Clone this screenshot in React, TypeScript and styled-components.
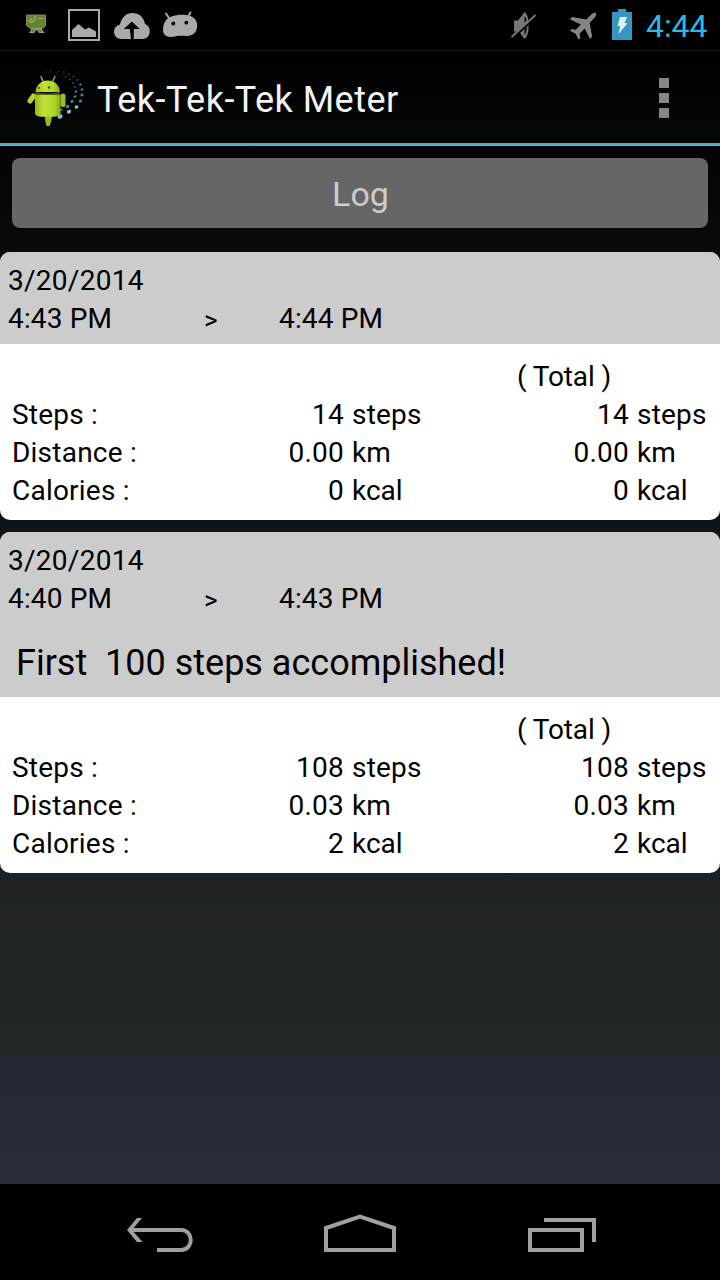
import React from "react";
import styled, { createGlobalStyle } from "styled-components";

const GlobalStyle = createGlobalStyle`
  * { box-sizing: border-box; }
  body { margin: 0; background: #000; font-family: Roboto, "Noto Sans", sans-serif; }
`;

const Screen = styled.div`
  width: 720px;
  height: 1280px;
  display: flex;
  flex-direction: column;
  overflow: hidden;
  background: linear-gradient(#000 0, #020303 146px, #08090b 240px, #111518 526px, #1e2225 880px, #23282a 1056px, #252931 1056px, #282c34 1184px);
`;

const StatusBar = styled.header`
  height: 50px;
  flex: none;
  display: flex;
  justify-content: space-between;
  background: #000;
`;

const Clock = styled.time`
  width: 74px;
  margin-left: 12px;
  font-size: 32px;
  line-height: 52px;
  letter-spacing: -0.1px;
  white-space: nowrap;
  color: #33b5e5;
`;

const StatusGroup = styled.div`
  display: flex;
  height: 50px;
`;

const ActionBar = styled.div`
  height: 96px;
  flex: none;
  display: flex;
  align-items: center;
  padding: 2px 51px 0 26px;
  background: linear-gradient(#000, #050707);
  border-top: 1px solid #181a1b;
  border-bottom: 3px solid #4fadd9;
`;

const Title = styled.h1`
  flex: 1;
  margin: 0 0 0 11px;
  padding-top: 4px;
  font-size: 36px;
  line-height: 44px;
  font-weight: 400;
  letter-spacing: 0.47px;
  white-space: nowrap;
  color: #f3f3f3;
`;

const Overflow = styled.div`
  display: grid;
  gap: 5px;
`;

const OverflowDot = styled.i`
  width: 10px;
  height: 10px;
  background: #868686;
`;

const Content = styled.main`
  flex: 1;
  display: flex;
  flex-direction: column;
`;

const LogButton = styled.button`
  margin: 12px 12px 24px;
  height: 70px;
  padding: 2px 0 0 1px;
  border: 0;
  border-radius: 8px;
  background: #666;
  color: #ccc;
  font-family: inherit;
  font-size: 34px;
  line-height: 40px;
`;

const Card = styled.section`
  margin-bottom: 12px;
  border-radius: 10px;
  overflow: hidden;
  background: #fff;
  color: #000;
  font-size: 28px;
  line-height: 38px;
  white-space: pre;
`;

const CardHead = styled.div`
  padding: 10px 8px 6px;
  background: #ccc;
`;

const DateText = styled.div`
  letter-spacing: 0.27px;
`;

const TimeRow = styled.div`
  display: grid;
  grid-template-columns: 196px 75px 1fr;
  letter-spacing: 0.15px;
`;

const Arrow = styled.span`
  font-size: 26px;
  line-height: 40px;
  height: 38px;
`;

const Achievement = styled.div`
  padding: 0 8px;
  margin-top: 20px;
  font-size: 36px;
  line-height: 50px;
  height: 53px;
`;

const CardBody = styled.div`
  padding: 14px 0 10px 12px;
`;

const StatRow = styled.div`
  display: grid;
  grid-template-columns: 232px 100px 185px 100px 1fr;
`;

const StatLabel = styled.span`
  letter-spacing: 0.22px;
`;

const Num = styled.span`
  text-align: right;
  letter-spacing: 0.25px;
`;

const Unit = styled.span<{ $tracking: string }>`
  padding-left: 8px;
  letter-spacing: ${(p) => p.$tracking};
`;

const TotalLabel = styled.div`
  padding-left: 505px;
  letter-spacing: -0.12px;
`;

const NavBar = styled.nav`
  height: 96px;
  flex: none;
  display: flex;
  justify-content: space-between;
  padding: 0 120px;
  background: #000;
`;

type Stat = { label: string; value: string; total: string; unit: string };
type Entry = { date: string; from: string; to: string; achievement?: string; stats: Stat[] };

const entries: Entry[] = [
  {
    date: "3/20/2014",
    from: "4:43 PM",
    to: "4:44 PM",
    stats: [
      { label: "Steps :", value: "14", total: "14", unit: "steps" },
      { label: "Distance :", value: "0.00", total: "0.00", unit: "km" },
      { label: "Calories :", value: "0", total: "0", unit: "kcal" },
    ],
  },
  {
    date: "3/20/2014",
    from: "4:40 PM",
    to: "4:43 PM",
    achievement: "First  100 steps accomplished!",
    stats: [
      { label: "Steps :", value: "108", total: "108", unit: "steps" },
      { label: "Distance :", value: "0.03", total: "0.03", unit: "km" },
      { label: "Calories :", value: "2", total: "2", unit: "kcal" },
    ],
  },
];

const NotificationIcons = () => (
  <svg width="210" height="50" viewBox="0 0 210 50">
    <path d="M26.500 15h19v11l-3 2.500h-12l-4-3z" fill="#66852b" stroke="#7d8a5c" strokeWidth="1" />
    <path d="M31.500 28.500h10v2l2 2h-4l-1.500-2.500h-2.500l-1.500 2.500h-4l1.500-2z" fill="#66852b" stroke="#999c90" strokeWidth="1.200" />
    <path d="M35.500 16l-1 4.500-3 2-2-1.500 2.500-3M38 18.500h6" fill="none" stroke="#a3ad7d" strokeWidth="1.100" />
    <path d="M69 10h30v30H69z" fill="none" stroke="#aaa" strokeWidth="2" />
    <path d="M72 37v-7l6.500-6 6.500 5.500 4-2 7 4V37z" fill="#aaa" />
    <path d="M131 39h-10c-4 0-7-3.300-7-7.200 0-3.700 2.500-6.500 6-7.300 1.500-7 6-11.500 12.500-11.500 6.700 0 11.500 4.500 12.500 11 3 1 4.800 3.800 4.800 7.300 0 4.300-3 7.700-7 7.700h-9V29h6l-8-7.500-8 7.500h6z" fill="#aaa" />
    <path d="M163 30c0-7 3.500-12 8.500-13.500 5-2 11-2 16-1.300 6 1 9.700 5 9.700 10.300 0 6.500-4.500 10.500-10.200 10.500-4 0-8-.5-11 .3-7 2-13 0-13-6.300z" fill="#aaa" />
    <path d="M169 18l-3-4.500M188.500 16l2-3.500" stroke="#aaa" strokeWidth="2" strokeLinecap="round" />
    <circle cx="173.300" cy="23.500" r="1.900" />
    <circle cx="186.300" cy="22.700" r="1.900" />
  </svg>
);

const SystemIcons = () => (
  <svg width="144" height="50" viewBox="490 0 144 50">
    <path d="M514 20.500h4l6-7.500c4.500 4 4.500 22 0 25.500l-5-7h-5z" fill="#777" />
    <path d="M524 13c4.500 4 4.500 21 0 25" fill="none" stroke="#777" strokeWidth="2.500" />
    <path d="M524.500 16.500v6l2-2c-.3-2-1-3.500-2-4zM524.500 28v7c1.500-1.500 2.200-5 2.200-9z" fill="#000" />
    <path d="M512.500 38.500l24-22" stroke="#000" strokeWidth="2" />
    <path d="M511.500 37l24-22" stroke="#777" strokeWidth="1.900" />
    <path d="M595.800 13.200c1 1 .2 3-1.200 4.500l-5 5.300 2.600 13.800-2.200 2.200-5.300-10.500-5.200 5.200.8 4.300-1.600 1.500-3.200-5.700-5.500-3 1.600-1.700 4.200.7 5.100-5.200-11-5.300 2.300-2.200 14 2.500 5.200-5.200c1.500-1.500 3.500-2.200 4.400-1.200z" fill="#858585" />
    <path d="M612 12h6V9h8v3h6v28h-20z" fill="#3796bd" />
    <path d="M620 17h7l-2.500 6.300h3L618.500 34l1.700-8h-2.700z" fill="#def3fb" />
  </svg>
);

const trail: [number, number, number][] = [
  [60, 117.500, 2.600], [69, 112.700, 2.200], [76.500, 108, 2], [80.500, 102, 1.800], [82, 96, 1.600], [82, 90.500, 1.500],
  [80.500, 85.500, 1.300], [77.500, 81, 1.200], [73.500, 77.500, 1.100], [69, 75, 1], [64, 73, .9], [59, 72.500, .8], [51, 72, .7],
  [61, 111, 1.500], [67.500, 107.500, 1.900], [72, 102.500, 1.700], [75, 97.500, 1.500], [76, 92.500, 1.400], [75, 88, 1.200],
  [73, 84, 1.100], [70, 80.500, 1], [66, 78, .9], [62, 76, .8], [57, 74, .7], [46, 73, .6],
];

const AppIcon = () => (
  <svg width="60" height="64" viewBox="26 67 60 64">
    <defs>
      <linearGradient id="body" x1="0" x2="1" y1="0" y2="0">
        <stop offset="0" stopColor="#98b91c" />
        <stop offset=".35" stopColor="#c0e236" />
        <stop offset=".75" stopColor="#b0d628" />
        <stop offset="1" stopColor="#86a618" />
      </linearGradient>
    </defs>
    {trail.map(([x, y, r], i) => (
      <ellipse key={i} cx={x} cy={y} rx={r} ry={r * 0.8} fill={r > 1.9 ? "#86bfdc" : r > 1.200 ? "#4f809e" : "#33485c"} transform={`rotate(-25 ${x} ${y})`} />
    ))}
    <path d="M43.500 83l-2.500-5.500M52.300 83l2.700-5.500" stroke="#9bb344" strokeWidth="1.400" strokeLinecap="round" />
    <path d="M33.500 97l-3.500 5" stroke="#b0d628" strokeWidth="5" strokeLinecap="round" />
    <path d="M63 97v8.500" stroke="#9dc020" strokeWidth="5" strokeLinecap="round" />
    <path d="M44.500 115h8l-1.500 8-1.500 4h-3l-1-4z" fill="#9bb82a" />
    <path d="M35.500 93c.5-7 5.500-11.500 12.300-11.500S59.500 86 60 93z" fill="url(#body)" />
    <path d="M35 95.500h25.500V115c-1.500 2-4 2.500-7 2.700H41c-3-.2-5-1-6-2.700z" fill="url(#body)" />
    <path d="M35.500 94c6 1.500 18 1.500 24.500 0" fill="none" stroke="#4e6113" strokeWidth="1.400" />
    <circle cx="39" cy="89" r="1" fill="#485616" />
    <circle cx="49" cy="88.500" r="1.200" fill="#485616" />
  </svg>
);

const BackIcon = () => (
  <svg width="80" height="96" viewBox="120 1184 80 96" fill="none" stroke="#a0a0a0" strokeWidth="4">
    <path d="M157 1250h24c13 0 13-20 0-20h-51" />
    <path d="M142 1218h-5l-10 12 10 12h5.500l-10.500-12z" fill="#a0a0a0" stroke="none" />
  </svg>
);

const HomeIcon = () => (
  <svg width="80" height="96" viewBox="320 1184 80 96" fill="none" stroke="#a0a0a0" strokeWidth="4">
    <path d="M326 1250v-22l34-11.500 34 11.500v22z" />
  </svg>
);

const RecentIcon = () => (
  <svg width="80" height="96" viewBox="520 1184 80 96" fill="none" stroke="#a0a0a0" strokeWidth="4">
    <path d="M530 1230h52v20h-52zM544 1220h50v22" />
  </svg>
);

const LogCard = ({ entry }: { entry: Entry }) => (
  <Card>
    <CardHead>
      <DateText>{entry.date}</DateText>
      <TimeRow>
        <span>{entry.from}</span>
        <Arrow>&gt;</Arrow>
        <span>{entry.to}</span>
      </TimeRow>
      {entry.achievement && <Achievement>{entry.achievement}</Achievement>}
    </CardHead>
    <CardBody>
      <TotalLabel>( Total )</TotalLabel>
      {entry.stats.map((s) => {
        const tracking = s.unit === "steps" ? "0.2px" : "0";
        return (
          <StatRow key={s.label}>
            <StatLabel>{s.label}</StatLabel>
            <Num>{s.value}</Num>
            <Unit $tracking={tracking}>{s.unit}</Unit>
            <Num>{s.total}</Num>
            <Unit $tracking={tracking}>{s.unit}</Unit>
          </StatRow>
        );
      })}
    </CardBody>
  </Card>
);

export default function App() {
  return (
    <>
      <GlobalStyle />
      <Screen>
        <StatusBar>
          <NotificationIcons />
          <StatusGroup>
            <SystemIcons />
            <Clock>4:44</Clock>
          </StatusGroup>
        </StatusBar>
        <ActionBar>
          <AppIcon />
          <Title>Tek-Tek-Tek Meter</Title>
          <Overflow>
            <OverflowDot />
            <OverflowDot />
            <OverflowDot />
          </Overflow>
        </ActionBar>
        <Content>
          <LogButton>Log</LogButton>
          {entries.map((entry) => (
            <LogCard key={entry.from} entry={entry} />
          ))}
        </Content>
        <NavBar>
          <BackIcon />
          <HomeIcon />
          <RecentIcon />
        </NavBar>
      </Screen>
    </>
  );
}
